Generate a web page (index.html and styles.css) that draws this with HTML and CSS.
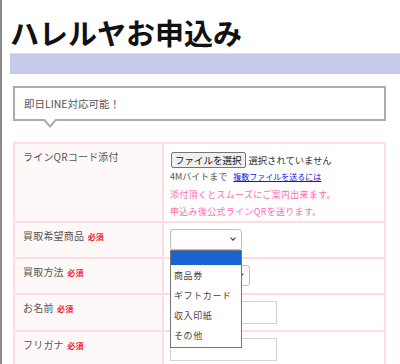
FILE: index.html
```html
<!DOCTYPE html>
<html lang="ja">
<head>
  <meta charset="UTF-8" />
  <title>ハレルヤお申込み</title>
  <link rel="stylesheet" href="styles.css">
</head>
<body>
  <div id="page">
    <h1 id="title">ハレルヤお申込み</h1>
    <div id="title-bar"></div>

    <div id="balloon">即日LINE対応可能！</div>

    <table id="form-table">
      <tr class="row-qr">
        <th>ラインQRコード添付</th>
        <td>
          <div class="file-line">
            <button class="file-btn" type="button">ファイルを選択</button>
            <span class="file-status">選択されていません</span>
          </div>
          <div class="size-note">4Mバイトまで <a href="#" class="multi-link">複数ファイルを送るには</a></div>
          <p class="pink-note">添付頂くとスムーズにご案内出来ます。<br>申込み後公式ラインQRを送ります。</p>
        </td>
      </tr>
      <tr class="row-short">
        <th>買取希望商品 <span class="req">必須</span></th>
        <td>
          <div class="select-wrap">
            <div class="fake-select short"><span class="chev"></span></div>
            <!-- 開いたプルダウン -->
            <ul class="dropdown">
              <li class="active">&nbsp;</li>
              <li>商品券</li>
              <li>ギフトカード</li>
              <li>収入印紙</li>
              <li>その他</li>
            </ul>
          </div>
        </td>
      </tr>
      <tr class="row-short">
        <th>買取方法 <span class="req">必須</span></th>
        <td><div class="fake-select wide"><span class="chev"></span></div></td>
      </tr>
      <tr class="row-input">
        <th>お名前 <span class="req">必須</span></th>
        <td><input class="text-input" type="text"></td>
      </tr>
      <tr class="row-input">
        <th>フリガナ <span class="req">必須</span></th>
        <td><input class="text-input" type="text"></td>
      </tr>
    </table>
  </div>
</body>
</html>
```
FILE: styles.css
```css
body {
  margin: 0;
  font-family: "Noto Sans CJK JP", "Noto Sans", sans-serif;
  background: #fff;
  border-left: 2px solid #8a8a8a;
  min-height: 100vh;
  box-sizing: border-box;
  overflow: hidden;
}

/* ページ全体 */
#page {
  padding: 0 0 0 8px;
}

#title {
  margin: 0;
  padding-top: 14px;
  font-size: 29px;
  line-height: 36px;
  font-weight: bold;
  color: #111;
}

#title-bar {
  margin-top: 3px;
  height: 20px;
  background: #c6c9ea;
  border-top: 1px solid #dcdff3;
}

/* 吹き出し */
#balloon {
  position: relative;
  margin: 12px 14px 0 3px;
  height: 31px;
  border: 2px solid #ababab;
  padding-left: 9px;
  font-size: 10.5px;
  line-height: 31px;
  color: #555;
}

#balloon::before,
#balloon::after {
  content: "";
  position: absolute;
  left: 27px;
  border-style: solid;
  border-color: transparent;
}

#balloon::before {
  top: 100%;
  border-width: 9px 8px 0 8px;
  border-top-color: #ababab;
}

#balloon::after {
  top: 100%;
  margin-top: -1px;
  margin-left: 2px;
  border-width: 7px 6px 0 6px;
  border-top-color: #fff;
}

/* フォーム表 */
#form-table {
  margin: 21px 0 0 3px;
  width: 373px;
  border-collapse: collapse;
  border: 2px solid #fddde4;
}

#form-table th,
#form-table td {
  border: 2px solid #fddde4;
  text-align: left;
  vertical-align: top;
  box-sizing: border-box;
}

#form-table th {
  width: 149px;
  padding: 4px 8px 0 8px;
  background: #fff8f8;
  font-size: 10px;
  font-weight: normal;
  line-height: 18px;
  color: #555;
  letter-spacing: 0.2px;
  white-space: nowrap;
}

#form-table td {
  padding: 6px 6px 0 6px;
  font-size: 10px;
  color: #444;
}

.row-qr th,
.row-qr td { height: 79px; }
.row-short th,
.row-short td { height: 36px; }
.row-input th,
.row-input td { height: 37px; }

.row-short td { padding-top: 9px; }
.row-input td { padding-top: 5px; }

.req {
  color: #f01c2c;
  font-size: 8px;
  font-weight: bold;
  margin-left: 1px;
}

.file-line {
  display: flex;
  align-items: center;
  gap: 3px;
  height: 18px;
  margin-top: 1px;
}

.file-btn {
  font-family: inherit;
  font-size: 9.5px;
  height: 16px;
  padding: 0 3px;
  line-height: 13px;
  border: 1px solid #767676;
  border-radius: 2px;
  background: #efefef;
  color: #111;
  margin: 0 0 0 1px;
}

.file-status {
  font-size: 9.3px;
  color: #333;
}

.size-note {
  margin-top: 1px;
  font-size: 9px;
  line-height: 14px;
  color: #555;
}

.multi-link {
  margin-left: 4px;
  color: #1515d8;
  font-size: 8px;
}

.pink-note {
  margin: 2px 0 0;
  font-size: 9px;
  line-height: 17px;
  color: #fb6eb0;
  letter-spacing: 0.3px;
}

/* セレクト */
.select-wrap {
  position: relative;
}

.fake-select {
  height: 19px;
  border: 1px solid #c9b9bc;
  border-radius: 3px;
  background: #fff;
  position: relative;
  box-sizing: content-box;
}

.fake-select.short { width: 70px; }
.fake-select.wide { width: 78px; }

.chev {
  position: absolute;
  right: 6px;
  top: 6px;
  width: 3px;
  height: 3px;
  border-right: 1.5px solid #333;
  border-bottom: 1.5px solid #333;
  transform: rotate(45deg);
}

/* 開いたリスト */
.dropdown {
  position: absolute;
  top: 21px;
  left: 0;
  width: 70px;
  margin: 0;
  padding: 0 0 1px;
  list-style: none;
  background: #fff;
  border: 1px solid #767676;
  z-index: 5;
}

.dropdown li {
  height: 20px;
  line-height: 20px;
  padding-left: 3px;
  font-size: 9px;
  color: #444;
  letter-spacing: 0.6px;
  white-space: nowrap;
}

.dropdown li.active {
  height: 14px;
  background: #1a64d2;
  margin-bottom: 1px;
}

.text-input {
  display: block;
  width: 107px;
  height: 23px;
  box-sizing: border-box;
  border: 1px solid #d3d3d3;
  padding: 1px 2px;
  margin: 0;
  font-family: inherit;
}
```
